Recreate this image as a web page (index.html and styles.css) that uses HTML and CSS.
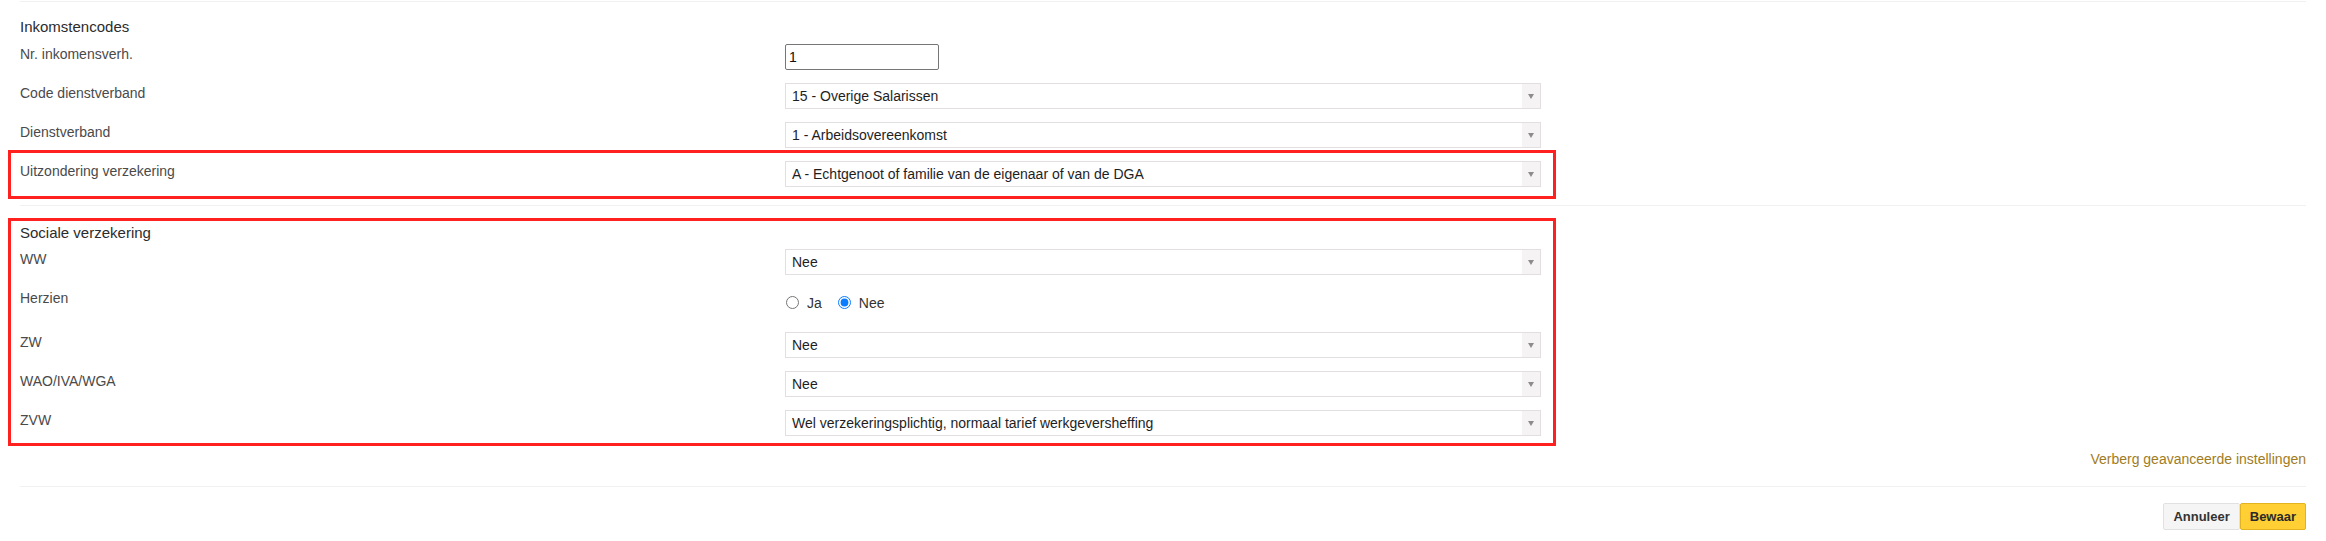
FILE: index.html
```html
<!DOCTYPE html>
<html lang="nl">
<head>
<meta charset="utf-8">
<title>Inkomstencodes</title>
<link rel="stylesheet" href="styles.css">
</head>
<body>
<div class="page">
  <div class="rule rule-top"></div>

  <section class="group">
    <h3 class="group-title">Inkomstencodes</h3>
    <div class="row">
      <label class="lbl" for="nr">Nr. inkomensverh.</label>
      <div class="ctl"><input id="nr" class="num" type="text" value="1"></div>
    </div>
    <div class="row">
      <label class="lbl">Code dienstverband</label>
      <div class="ctl select"><select><option>15 - Overige Salarissen</option></select></div>
    </div>
    <div class="row">
      <label class="lbl">Dienstverband</label>
      <div class="ctl select"><select><option>1 - Arbeidsovereenkomst</option></select></div>
    </div>
    <div class="hl hl-row">
      <div class="row">
        <label class="lbl">Uitzondering verzekering</label>
        <div class="ctl select"><select><option>A - Echtgenoot of familie van de eigenaar of van de DGA</option></select></div>
      </div>
    </div>
  </section>

  <div class="rule rule-mid"></div>

  <section class="group hl hl-group">
    <h3 class="group-title">Sociale verzekering</h3>
    <div class="row">
      <label class="lbl">WW</label>
      <div class="ctl select"><select><option>Nee</option></select></div>
    </div>
    <div class="row">
      <label class="lbl">Herzien</label>
      <div class="ctl radios">
        <label class="opt"><input type="radio" name="herzien"> Ja</label>
        <label class="opt"><input type="radio" name="herzien" checked> Nee</label>
      </div>
    </div>
    <div class="row">
      <label class="lbl">ZW</label>
      <div class="ctl select"><select><option>Nee</option></select></div>
    </div>
    <div class="row">
      <label class="lbl">WAO/IVA/WGA</label>
      <div class="ctl select"><select><option>Nee</option></select></div>
    </div>
    <div class="row">
      <label class="lbl">ZVW</label>
      <div class="ctl select"><select><option>Wel verzekeringsplichtig, normaal tarief werkgeversheffing</option></select></div>
    </div>
  </section>

  <div class="adv"><a href="#" class="adv-link">Verberg geavanceerde instellingen</a></div>

  <div class="rule rule-bottom"></div>

  <div class="actions">
    <button class="btn" type="button">Annuleer</button>
    <button class="btn btn-primary" type="button">Bewaar</button>
  </div>
</div>
</body>
</html>
```

FILE: styles.css
```css
* { box-sizing: border-box; }

html, body {
  margin: 0;
  padding: 0;
  background: #ffffff;
}

body {
  font-family: "Liberation Sans", Arial, Helvetica, sans-serif;
  font-size: 14px;
  color: #444444;
}

.page {
  padding: 0 20px;
}

.rule {
  height: 1px;
  background: #f1f1f1;
}

.rule-top { margin-top: 1px; }
.rule-mid { margin-top: 6px; }
.rule-bottom { margin-top: 17px; }

.group {
  width: 1521px;
}

.group-title {
  margin: 15px 0 7px;
  font-size: 15px;
  line-height: 20px;
  font-weight: normal;
  color: #2c2c2c;
}

.row {
  display: grid;
  grid-template-columns: 765px 756px;
  align-items: start;
  margin-bottom: 13px;
}

.lbl {
  padding-top: 1px;
  font-size: 14px;
  line-height: 19px;
  color: #4a4a4a;
}

.num {
  display: block;
  width: 154px;
  height: 26px;
  margin: 0;
  padding: 0 3px;
  border: 1px solid #767676;
  border-radius: 2px;
  font-family: inherit;
  font-size: 14px;
  color: #111111;
  background: #ffffff;
}

.select {
  position: relative;
  height: 26px;
}

.select select {
  display: block;
  width: 100%;
  height: 26px;
  margin: 0;
  padding: 0 26px 0 6px;
  border: 1px solid #e3dfe1;
  border-radius: 0;
  background: #ffffff;
  font-family: inherit;
  font-size: 14px;
  color: #1e1e1e;
  -webkit-appearance: none;
  appearance: none;
}

.select::before {
  content: "";
  position: absolute;
  top: 1px;
  right: 1px;
  bottom: 1px;
  width: 18px;
  background: #f5f3f4;
  pointer-events: none;
}

.select::after {
  content: "";
  position: absolute;
  top: 11px;
  right: 7px;
  width: 0;
  height: 0;
  border-left: 3px solid transparent;
  border-right: 3px solid transparent;
  border-top: 5px solid #8c8c8c;
  pointer-events: none;
}

.radios {
  display: flex;
  align-items: center;
  height: 31px;
  padding-bottom: 2px;
}

.opt {
  display: flex;
  align-items: center;
  gap: 8px;
  margin-right: 15px;
  font-size: 14px;
  color: #333333;
}

.opt input {
  width: 13px;
  height: 13px;
  margin: 0 0 0 1px;
  accent-color: #0a7cff;
}

/* annotation boxes */
.hl {
  border: 3px solid #ff2020;
}

.hl-row {
  width: calc(1521px + 27px);
  margin: -11px 0 0 -12px;
  padding: 8px 12px 0 9px;
}

.hl-row .row:last-child { margin-bottom: 9px; }

.hl-group {
  box-sizing: content-box;
  width: 1521px;
  margin: 12px 0 0 -12px;
  padding: 2px 12px 0 9px;
}

.hl-group .group-title { margin-top: 0; margin-bottom: 6px; }
.hl-group .row:last-child { margin-bottom: 7px; }

.adv {
  margin-top: 3px;
  text-align: right;
  line-height: 20px;
}

.adv-link {
  font-size: 14px;
  color: #a07c1e;
  text-decoration: none;
}

.actions {
  display: flex;
  justify-content: flex-end;
  margin-top: 16px;
}

.btn {
  height: 27px;
  margin: 0;
  padding: 0 9px;
  border: 1px solid #e1e1e1;
  border-radius: 2px;
  background: #f5f5f5;
  font-family: inherit;
  font-size: 13px;
  font-weight: bold;
  color: #333333;
}

.btn-primary {
  margin-left: 0;
  border-color: #e2b21f;
  background: #ffcf33;
  color: #2a2a2a;
}
```
